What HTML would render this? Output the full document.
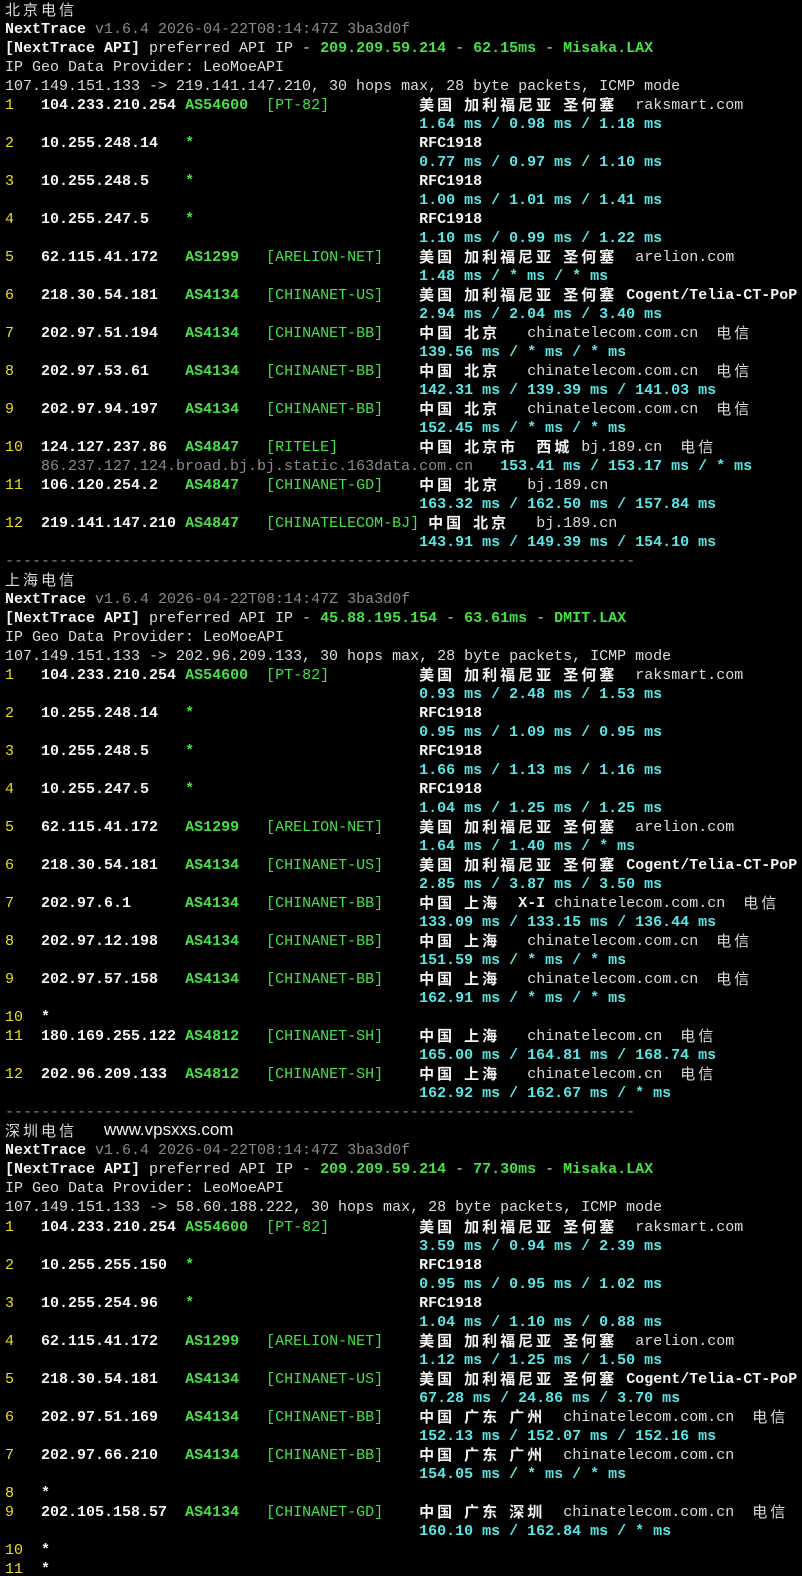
<!DOCTYPE html>
<html><head><meta charset="utf-8"><style>
html,body{margin:0;padding:0;background:#000;width:802px;height:1576px;overflow:hidden}
pre{margin:0.5px 0 0 5px;font-family:"Liberation Mono",monospace;font-size:15px;line-height:19.01px;color:#dcdcdc;white-space:pre}
.y{color:#ecdf1e}.w{color:#f4f4f4;font-weight:bold}.g{color:#47e047;font-weight:bold}.n{color:#47e047}
.c{color:#5ae6e6;font-weight:bold}.d{color:#8a8a8a}
.k{font-family:"Noto Sans CJK SC",sans-serif;font-weight:bold;letter-spacing:3px;color:#f4f4f4;line-height:0;position:relative;top:1px}
.t{font-family:"Noto Sans CJK SC",sans-serif;letter-spacing:3px;color:#dcdcdc;line-height:0;position:relative;top:1px}
.u{font-family:"Liberation Sans",sans-serif;font-size:17px;color:#f4f4f4;line-height:0}
</style></head><body><pre><span class="t">北京电信</span>
<span class="w">NextTrace</span> <span class="d">v1.6.4 2026-04-22T08:14:47Z 3ba3d0f</span>
<span class="w">[NextTrace API]</span> preferred API IP - <span class="g">209.209.59.214</span> - <span class="g">62.15ms</span> - <span class="g">Misaka.LAX</span>
IP Geo Data Provider: LeoMoeAPI
107.149.151.133 -> 219.141.147.210, 30 hops max, 28 byte packets, ICMP mode
<span class="y">1   </span><span class="w">104.233.210.254</span> <span class="g">AS54600</span>  <span class="n">[PT-82]</span>          <span class="k">美国</span> <span class="k">加利福尼亚</span> <span class="k">圣何塞</span>  raksmart.com
                                              <span class="c">1.64 ms / 0.98 ms / 1.18 ms</span>
<span class="y">2   </span><span class="w">10.255.248.14</span>   <span class="g">*</span>                         <span class="w">RFC1918</span>
                                              <span class="c">0.77 ms / 0.97 ms / 1.10 ms</span>
<span class="y">3   </span><span class="w">10.255.248.5</span>    <span class="g">*</span>                         <span class="w">RFC1918</span>
                                              <span class="c">1.00 ms / 1.01 ms / 1.41 ms</span>
<span class="y">4   </span><span class="w">10.255.247.5</span>    <span class="g">*</span>                         <span class="w">RFC1918</span>
                                              <span class="c">1.10 ms / 0.99 ms / 1.22 ms</span>
<span class="y">5   </span><span class="w">62.115.41.172</span>   <span class="g">AS1299</span>   <span class="n">[ARELION-NET]</span>    <span class="k">美国</span> <span class="k">加利福尼亚</span> <span class="k">圣何塞</span>  arelion.com
                                              <span class="c">1.48 ms / * ms / * ms</span>
<span class="y">6   </span><span class="w">218.30.54.181</span>   <span class="g">AS4134</span>   <span class="n">[CHINANET-US]</span>    <span class="k">美国</span> <span class="k">加利福尼亚</span> <span class="k">圣何塞</span> <span class="w">Cogent/Telia-CT-PoP</span>
                                              <span class="c">2.94 ms / 2.04 ms / 3.40 ms</span>
<span class="y">7   </span><span class="w">202.97.51.194</span>   <span class="g">AS4134</span>   <span class="n">[CHINANET-BB]</span>    <span class="k">中国</span> <span class="k">北京</span>   chinatelecom.com.cn  <span class="t">电信</span>
                                              <span class="c">139.56 ms / * ms / * ms</span>
<span class="y">8   </span><span class="w">202.97.53.61</span>    <span class="g">AS4134</span>   <span class="n">[CHINANET-BB]</span>    <span class="k">中国</span> <span class="k">北京</span>   chinatelecom.com.cn  <span class="t">电信</span>
                                              <span class="c">142.31 ms / 139.39 ms / 141.03 ms</span>
<span class="y">9   </span><span class="w">202.97.94.197</span>   <span class="g">AS4134</span>   <span class="n">[CHINANET-BB]</span>    <span class="k">中国</span> <span class="k">北京</span>   chinatelecom.com.cn  <span class="t">电信</span>
                                              <span class="c">152.45 ms / * ms / * ms</span>
<span class="y">10  </span><span class="w">124.127.237.86</span>  <span class="g">AS4847</span>   <span class="n">[RITELE]</span>         <span class="k">中国</span> <span class="k">北京市</span>  <span class="k">西城</span> bj.189.cn  <span class="t">电信</span>
    <span class="d">86.237.127.124.broad.bj.bj.static.163data.com.cn</span>   <span class="c">153.41 ms / 153.17 ms / * ms</span>
<span class="y">11  </span><span class="w">106.120.254.2</span>   <span class="g">AS4847</span>   <span class="n">[CHINANET-GD]</span>    <span class="k">中国</span> <span class="k">北京</span>   bj.189.cn
                                              <span class="c">163.32 ms / 162.50 ms / 157.84 ms</span>
<span class="y">12  </span><span class="w">219.141.147.210</span> <span class="g">AS4847</span>   <span class="n">[CHINATELECOM-BJ]</span> <span class="k">中国</span> <span class="k">北京</span>   bj.189.cn
                                              <span class="c">143.91 ms / 149.39 ms / 154.10 ms</span>
<span class="d">----------------------------------------------------------------------</span>
<span class="t">上海电信</span>
<span class="w">NextTrace</span> <span class="d">v1.6.4 2026-04-22T08:14:47Z 3ba3d0f</span>
<span class="w">[NextTrace API]</span> preferred API IP - <span class="g">45.88.195.154</span> - <span class="g">63.61ms</span> - <span class="g">DMIT.LAX</span>
IP Geo Data Provider: LeoMoeAPI
107.149.151.133 -> 202.96.209.133, 30 hops max, 28 byte packets, ICMP mode
<span class="y">1   </span><span class="w">104.233.210.254</span> <span class="g">AS54600</span>  <span class="n">[PT-82]</span>          <span class="k">美国</span> <span class="k">加利福尼亚</span> <span class="k">圣何塞</span>  raksmart.com
                                              <span class="c">0.93 ms / 2.48 ms / 1.53 ms</span>
<span class="y">2   </span><span class="w">10.255.248.14</span>   <span class="g">*</span>                         <span class="w">RFC1918</span>
                                              <span class="c">0.95 ms / 1.09 ms / 0.95 ms</span>
<span class="y">3   </span><span class="w">10.255.248.5</span>    <span class="g">*</span>                         <span class="w">RFC1918</span>
                                              <span class="c">1.66 ms / 1.13 ms / 1.16 ms</span>
<span class="y">4   </span><span class="w">10.255.247.5</span>    <span class="g">*</span>                         <span class="w">RFC1918</span>
                                              <span class="c">1.04 ms / 1.25 ms / 1.25 ms</span>
<span class="y">5   </span><span class="w">62.115.41.172</span>   <span class="g">AS1299</span>   <span class="n">[ARELION-NET]</span>    <span class="k">美国</span> <span class="k">加利福尼亚</span> <span class="k">圣何塞</span>  arelion.com
                                              <span class="c">1.64 ms / 1.40 ms / * ms</span>
<span class="y">6   </span><span class="w">218.30.54.181</span>   <span class="g">AS4134</span>   <span class="n">[CHINANET-US]</span>    <span class="k">美国</span> <span class="k">加利福尼亚</span> <span class="k">圣何塞</span> <span class="w">Cogent/Telia-CT-PoP</span>
                                              <span class="c">2.85 ms / 3.87 ms / 3.50 ms</span>
<span class="y">7   </span><span class="w">202.97.6.1</span>      <span class="g">AS4134</span>   <span class="n">[CHINANET-BB]</span>    <span class="k">中国</span> <span class="k">上海</span>  <span class="w">X-I</span> chinatelecom.com.cn  <span class="t">电信</span>
                                              <span class="c">133.09 ms / 133.15 ms / 136.44 ms</span>
<span class="y">8   </span><span class="w">202.97.12.198</span>   <span class="g">AS4134</span>   <span class="n">[CHINANET-BB]</span>    <span class="k">中国</span> <span class="k">上海</span>   chinatelecom.com.cn  <span class="t">电信</span>
                                              <span class="c">151.59 ms / * ms / * ms</span>
<span class="y">9   </span><span class="w">202.97.57.158</span>   <span class="g">AS4134</span>   <span class="n">[CHINANET-BB]</span>    <span class="k">中国</span> <span class="k">上海</span>   chinatelecom.com.cn  <span class="t">电信</span>
                                              <span class="c">162.91 ms / * ms / * ms</span>
<span class="y">10  </span><span class="w">*</span>
<span class="y">11  </span><span class="w">180.169.255.122</span> <span class="g">AS4812</span>   <span class="n">[CHINANET-SH]</span>    <span class="k">中国</span> <span class="k">上海</span>   chinatelecom.cn  <span class="t">电信</span>
                                              <span class="c">165.00 ms / 164.81 ms / 168.74 ms</span>
<span class="y">12  </span><span class="w">202.96.209.133</span>  <span class="g">AS4812</span>   <span class="n">[CHINANET-SH]</span>    <span class="k">中国</span> <span class="k">上海</span>   chinatelecom.cn  <span class="t">电信</span>
                                              <span class="c">162.92 ms / 162.67 ms / * ms</span>
<span class="d">----------------------------------------------------------------------</span>
<span class="t">深圳电信</span>   <span class="u">www.vpsxxs.com</span>
<span class="w">NextTrace</span> <span class="d">v1.6.4 2026-04-22T08:14:47Z 3ba3d0f</span>
<span class="w">[NextTrace API]</span> preferred API IP - <span class="g">209.209.59.214</span> - <span class="g">77.30ms</span> - <span class="g">Misaka.LAX</span>
IP Geo Data Provider: LeoMoeAPI
107.149.151.133 -> 58.60.188.222, 30 hops max, 28 byte packets, ICMP mode
<span class="y">1   </span><span class="w">104.233.210.254</span> <span class="g">AS54600</span>  <span class="n">[PT-82]</span>          <span class="k">美国</span> <span class="k">加利福尼亚</span> <span class="k">圣何塞</span>  raksmart.com
                                              <span class="c">3.59 ms / 0.94 ms / 2.39 ms</span>
<span class="y">2   </span><span class="w">10.255.255.150</span>  <span class="g">*</span>                         <span class="w">RFC1918</span>
                                              <span class="c">0.95 ms / 0.95 ms / 1.02 ms</span>
<span class="y">3   </span><span class="w">10.255.254.96</span>   <span class="g">*</span>                         <span class="w">RFC1918</span>
                                              <span class="c">1.04 ms / 1.10 ms / 0.88 ms</span>
<span class="y">4   </span><span class="w">62.115.41.172</span>   <span class="g">AS1299</span>   <span class="n">[ARELION-NET]</span>    <span class="k">美国</span> <span class="k">加利福尼亚</span> <span class="k">圣何塞</span>  arelion.com
                                              <span class="c">1.12 ms / 1.25 ms / 1.50 ms</span>
<span class="y">5   </span><span class="w">218.30.54.181</span>   <span class="g">AS4134</span>   <span class="n">[CHINANET-US]</span>    <span class="k">美国</span> <span class="k">加利福尼亚</span> <span class="k">圣何塞</span> <span class="w">Cogent/Telia-CT-PoP</span>
                                              <span class="c">67.28 ms / 24.86 ms / 3.70 ms</span>
<span class="y">6   </span><span class="w">202.97.51.169</span>   <span class="g">AS4134</span>   <span class="n">[CHINANET-BB]</span>    <span class="k">中国</span> <span class="k">广东</span> <span class="k">广州</span>  chinatelecom.com.cn  <span class="t">电信</span>
                                              <span class="c">152.13 ms / 152.07 ms / 152.16 ms</span>
<span class="y">7   </span><span class="w">202.97.66.210</span>   <span class="g">AS4134</span>   <span class="n">[CHINANET-BB]</span>    <span class="k">中国</span> <span class="k">广东</span> <span class="k">广州</span>  chinatelecom.com.cn
                                              <span class="c">154.05 ms / * ms / * ms</span>
<span class="y">8   </span><span class="w">*</span>
<span class="y">9   </span><span class="w">202.105.158.57</span>  <span class="g">AS4134</span>   <span class="n">[CHINANET-GD]</span>    <span class="k">中国</span> <span class="k">广东</span> <span class="k">深圳</span>  chinatelecom.com.cn  <span class="t">电信</span>
                                              <span class="c">160.10 ms / 162.84 ms / * ms</span>
<span class="y">10  </span><span class="w">*</span>
<span class="y">11  </span><span class="w">*</span>
</pre></body></html>
